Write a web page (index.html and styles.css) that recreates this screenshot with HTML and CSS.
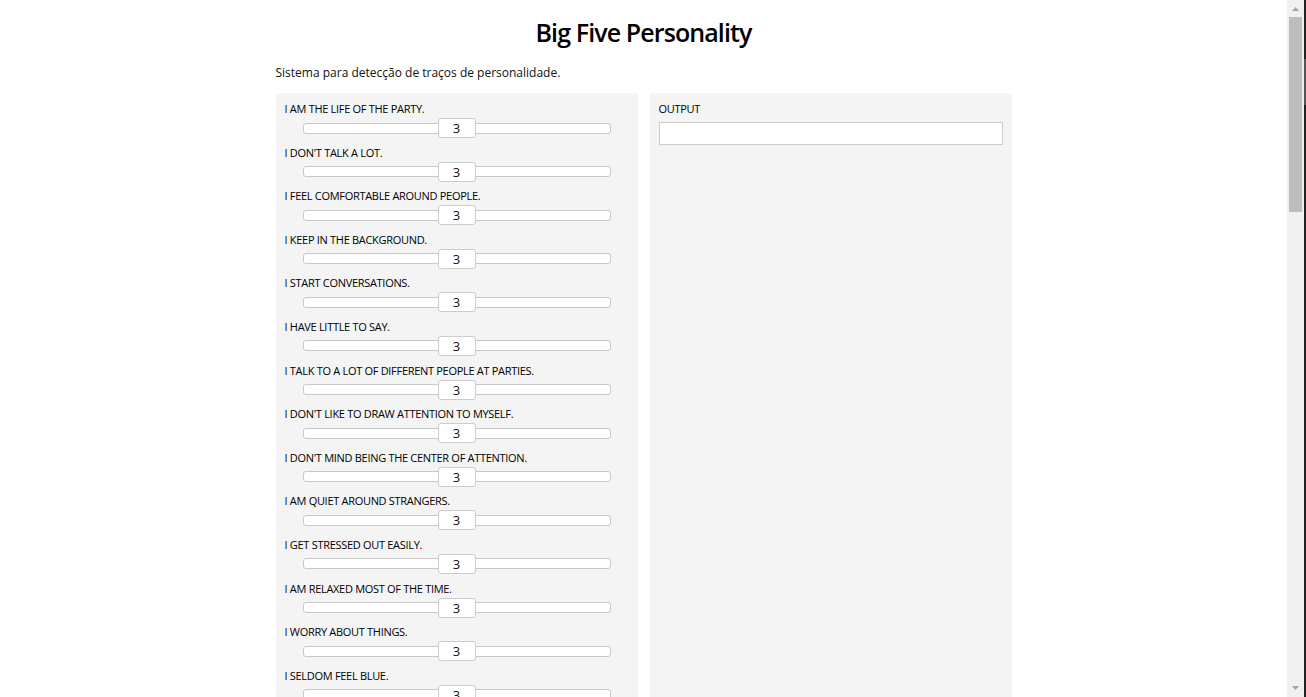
FILE: index.html
```html
<!DOCTYPE html>
<html lang="pt">
<head>
<meta charset="utf-8">
<title>Big Five Personality</title>
<link rel="stylesheet" href="styles.css">
</head>
<body>
<div class="window">
<div class="viewport">
<div class="page">
  <h1 class="title">Big Five Personality</h1>
  <p class="desc">Sistema para detecção de traços de personalidade.</p>
  <div class="panels">
    <div class="panel inputs">
      <div class="item"><div class="label">I am the life of the party.</div><div class="slider"><div class="track"></div><div class="handle">3</div></div></div>
      <div class="item"><div class="label">I don't talk a lot.</div><div class="slider"><div class="track"></div><div class="handle">3</div></div></div>
      <div class="item"><div class="label">I feel comfortable around people.</div><div class="slider"><div class="track"></div><div class="handle">3</div></div></div>
      <div class="item"><div class="label">I keep in the background.</div><div class="slider"><div class="track"></div><div class="handle">3</div></div></div>
      <div class="item"><div class="label">I start conversations.</div><div class="slider"><div class="track"></div><div class="handle">3</div></div></div>
      <div class="item"><div class="label">I have little to say.</div><div class="slider"><div class="track"></div><div class="handle">3</div></div></div>
      <div class="item"><div class="label">I talk to a lot of different people at parties.</div><div class="slider"><div class="track"></div><div class="handle">3</div></div></div>
      <div class="item"><div class="label">I don't like to draw attention to myself.</div><div class="slider"><div class="track"></div><div class="handle">3</div></div></div>
      <div class="item"><div class="label">I don't mind being the center of attention.</div><div class="slider"><div class="track"></div><div class="handle">3</div></div></div>
      <div class="item"><div class="label">I am quiet around strangers.</div><div class="slider"><div class="track"></div><div class="handle">3</div></div></div>
      <div class="item"><div class="label">I get stressed out easily.</div><div class="slider"><div class="track"></div><div class="handle">3</div></div></div>
      <div class="item"><div class="label">I am relaxed most of the time.</div><div class="slider"><div class="track"></div><div class="handle">3</div></div></div>
      <div class="item"><div class="label">I worry about things.</div><div class="slider"><div class="track"></div><div class="handle">3</div></div></div>
      <div class="item"><div class="label">I seldom feel blue.</div><div class="slider"><div class="track"></div><div class="handle">3</div></div></div>
      <div class="item"><div class="label">I am easily disturbed.</div><div class="slider"><div class="track"></div><div class="handle">3</div></div></div>
      <div class="item"><div class="label">I get upset easily.</div><div class="slider"><div class="track"></div><div class="handle">3</div></div></div>
      <div class="item"><div class="label">I change my mood a lot.</div><div class="slider"><div class="track"></div><div class="handle">3</div></div></div>
      <div class="item"><div class="label">I have frequent mood swings.</div><div class="slider"><div class="track"></div><div class="handle">3</div></div></div>
      <div class="item"><div class="label">I get irritated easily.</div><div class="slider"><div class="track"></div><div class="handle">3</div></div></div>
      <div class="item"><div class="label">I often feel blue.</div><div class="slider"><div class="track"></div><div class="handle">3</div></div></div>
      <div class="item"><div class="label">I feel little concern for others.</div><div class="slider"><div class="track"></div><div class="handle">3</div></div></div>
      <div class="item"><div class="label">I am interested in people.</div><div class="slider"><div class="track"></div><div class="handle">3</div></div></div>
      <div class="item"><div class="label">I insult people.</div><div class="slider"><div class="track"></div><div class="handle">3</div></div></div>
      <div class="item"><div class="label">I sympathize with others' feelings.</div><div class="slider"><div class="track"></div><div class="handle">3</div></div></div>
      <div class="item"><div class="label">I am not interested in other people's problems.</div><div class="slider"><div class="track"></div><div class="handle">3</div></div></div>
      <div class="item"><div class="label">I have a soft heart.</div><div class="slider"><div class="track"></div><div class="handle">3</div></div></div>
      <div class="item"><div class="label">I am not really interested in others.</div><div class="slider"><div class="track"></div><div class="handle">3</div></div></div>
      <div class="item"><div class="label">I take time out for others.</div><div class="slider"><div class="track"></div><div class="handle">3</div></div></div>
      <div class="item"><div class="label">I feel others' emotions.</div><div class="slider"><div class="track"></div><div class="handle">3</div></div></div>
      <div class="item"><div class="label">I make people feel at ease.</div><div class="slider"><div class="track"></div><div class="handle">3</div></div></div>
      <div class="item"><div class="label">I am always prepared.</div><div class="slider"><div class="track"></div><div class="handle">3</div></div></div>
      <div class="item"><div class="label">I leave my belongings around.</div><div class="slider"><div class="track"></div><div class="handle">3</div></div></div>
      <div class="item"><div class="label">I pay attention to details.</div><div class="slider"><div class="track"></div><div class="handle">3</div></div></div>
      <div class="item"><div class="label">I make a mess of things.</div><div class="slider"><div class="track"></div><div class="handle">3</div></div></div>
      <div class="item"><div class="label">I get chores done right away.</div><div class="slider"><div class="track"></div><div class="handle">3</div></div></div>
      <div class="item"><div class="label">I often forget to put things back in their proper place.</div><div class="slider"><div class="track"></div><div class="handle">3</div></div></div>
      <div class="item"><div class="label">I like order.</div><div class="slider"><div class="track"></div><div class="handle">3</div></div></div>
      <div class="item"><div class="label">I shirk my duties.</div><div class="slider"><div class="track"></div><div class="handle">3</div></div></div>
      <div class="item"><div class="label">I follow a schedule.</div><div class="slider"><div class="track"></div><div class="handle">3</div></div></div>
      <div class="item"><div class="label">I am exacting in my work.</div><div class="slider"><div class="track"></div><div class="handle">3</div></div></div>
      <div class="item"><div class="label">I have a rich vocabulary.</div><div class="slider"><div class="track"></div><div class="handle">3</div></div></div>
      <div class="item"><div class="label">I have difficulty understanding abstract ideas.</div><div class="slider"><div class="track"></div><div class="handle">3</div></div></div>
      <div class="item"><div class="label">I have a vivid imagination.</div><div class="slider"><div class="track"></div><div class="handle">3</div></div></div>
      <div class="item"><div class="label">I am not interested in abstract ideas.</div><div class="slider"><div class="track"></div><div class="handle">3</div></div></div>
      <div class="item"><div class="label">I have excellent ideas.</div><div class="slider"><div class="track"></div><div class="handle">3</div></div></div>
      <div class="item"><div class="label">I do not have a good imagination.</div><div class="slider"><div class="track"></div><div class="handle">3</div></div></div>
      <div class="item"><div class="label">I am quick to understand things.</div><div class="slider"><div class="track"></div><div class="handle">3</div></div></div>
      <div class="item"><div class="label">I use difficult words.</div><div class="slider"><div class="track"></div><div class="handle">3</div></div></div>
      <div class="item"><div class="label">I spend time reflecting on things.</div><div class="slider"><div class="track"></div><div class="handle">3</div></div></div>
      <div class="item"><div class="label">I am full of ideas.</div><div class="slider"><div class="track"></div><div class="handle">3</div></div></div>
    </div>
    <div class="panel outputs">
      <div class="label">Output</div>
      <div class="textbox"></div>
    </div>
  </div>
</div>
</div>
<div class="scrollbar" aria-hidden="true">
  <div class="sb-track">
    <div class="sb-btn"><svg width="17" height="17" viewBox="0 0 17 17"><path d="M5 11 L12 11 L8.5 7 Z" fill="#a3a3a3"/></svg></div>
    <div class="sb-thumb"></div>
    <div class="sb-btn sb-down"><svg width="17" height="17" viewBox="0 0 17 17"><path d="M5 6 L12 6 L8.5 10 Z" fill="#a3a3a3"/></svg></div>
  </div>
  <div class="sb-edge"><div class="sb-edge-mark"></div></div>
</div>
</div>
</body>
</html>
```

FILE: styles.css
```css
html, body {
  margin: 0;
  padding: 0;
  height: 100%;
  overflow: hidden;
  background: #ffffff;
}

body {
  font-family: "Open Sans", "Noto Sans", sans-serif;
  color: #111111;
}

.window {
  display: flex;
  height: 100vh;
}

.viewport {
  flex: 1;
  min-width: 0;
  overflow: hidden;
}

/* window scrollbar */
.scrollbar {
  display: flex;
  width: 19px;
  flex: none;
}

.sb-track {
  width: 17px;
  display: flex;
  flex-direction: column;
  background: #f0f0f0;
}

.sb-btn {
  height: 17px;
  flex: none;
}

.sb-btn svg {
  display: block;
}

.sb-thumb {
  height: 195px;
  margin: 0 2px;
  background: #bdbdbd;
  flex: none;
}

.sb-down {
  margin-top: auto;
}

.sb-edge {
  width: 2px;
  background: #222222;
}

.sb-edge-mark {
  margin-top: 59px;
  height: 46px;
  background: #555555;
}

/* page */
.page {
  width: 736px;
  margin: 0 auto;
  padding-bottom: 40px;
}

.title {
  margin: 0;
  padding-top: 15px;
  text-align: center;
  font-size: 25px;
  font-weight: 600;
  line-height: 35px;
  color: #000000;
  letter-spacing: -0.9px;
}

.desc {
  margin: 14px 0 0 0;
  font-size: 12px;
  line-height: 17px;
  color: #111111;
}

.panels {
  display: flex;
  gap: 12px;
  margin-top: 12px;
  align-items: stretch;
}

.panel {
  flex: 1;
  background: #f4f4f4;
  border-radius: 3px;
  padding: 8px 9px 8px 9px;
}

.label {
  font-size: 11px;
  line-height: 16px;
  text-transform: uppercase;
  font-weight: 500;
  letter-spacing: -0.3px;
  color: #000000;
}

.item {
  height: 43.6px;
}

.slider {
  position: relative;
  margin: 1px 18px 0 18px;
  height: 20px;
  display: flex;
  align-items: center;
}

.track {
  flex: 1;
  height: 9px;
  background: #ffffff;
  border: 1px solid #c8c8c8;
  border-radius: 3px;
}

.handle {
  position: absolute;
  left: 50%;
  top: 0;
  transform: translateX(-50%);
  width: 36px;
  height: 18px;
  background: #ffffff;
  border: 1px solid #cccccc;
  border-radius: 3px;
  font-size: 13px;
  line-height: 19px;
  text-align: center;
  color: #111111;
}

.textbox {
  margin-top: 5px;
  height: 21px;
  background: #ffffff;
  border: 1px solid #cccccc;
}
```
